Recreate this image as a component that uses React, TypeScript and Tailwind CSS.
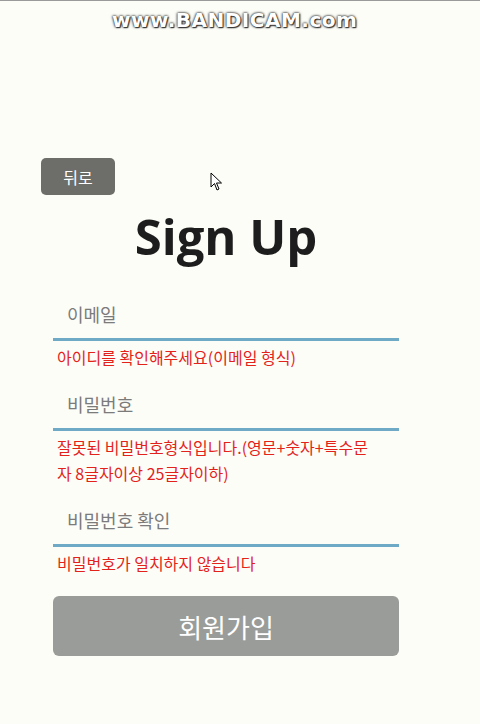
import React from "react";

const KR = "font-['Noto_Sans_CJK_KR','Noto_Sans',sans-serif]";

function Field({ placeholder, error, type = "text" }: { placeholder: string; error: string; type?: string }) {
  return (
    <div className="flex flex-col pb-[9px]">
      <input
        type={type}
        placeholder={placeholder}
        className={`h-[52px] w-full border-b-[3px] border-[#6ea9c6] bg-transparent px-[14px] text-[18px] text-[#333] outline-none placeholder:text-[#7b7b7b] ${KR}`}
      />
      <p className={`mt-[3px] min-h-[26px] pl-[4px] pr-[20px] text-[16px] leading-[26px] text-[#e3231b] ${KR}`}>{error}</p>
    </div>
  );
}

export default function App() {
  return (
    <div className="relative h-[724px] w-[480px] overflow-hidden border-t border-[#9a9a9a] bg-[#fdfdf8]">
      {/* recorder watermark */}
      <div className="absolute left-[112px] top-[4px] font-['DejaVu_Sans',sans-serif] text-[20px] font-bold tracking-[0.5px] text-white [text-shadow:0_0_2px_#222,0_0_3px_#444,1px_1px_1px_#333]">
        www.BANDICAM.com
      </div>

      {/* mouse cursor */}
      <svg className="absolute left-[210px] top-[171px]" width="13" height="20" viewBox="0 0 13 20">
        <path d="M1 1 L1 15 L4.5 11.5 L7 18 L9 17 L6.5 11 L11.5 11 Z" fill="white" stroke="black" strokeWidth="1" strokeLinejoin="round" />
      </svg>

      <div className="flex flex-col pl-[41px] pt-[157px]">
        <button className={`h-[37px] w-[74px] rounded-[5px] bg-[#6d6d69] text-[16px] text-white ${KR}`}>
          뒤로
        </button>
      </div>

      <div className="ml-[53px] flex w-[346px] flex-col">
        <h1 className="mt-[10px] text-center font-['Open_Sans',sans-serif] text-[49px] font-bold leading-[62px] text-[#1d1d1d]">
          Sign Up
        </h1>
        <div className="mt-[22px] flex flex-col">
          <Field placeholder="이메일" error="아이디를 확인해주세요(이메일 형식)" />
          <Field type="password" placeholder="비밀번호" error="잘못된 비밀번호형식입니다.(영문+숫자+특수문자 8글자이상 25글자이하)" />
          <Field type="password" placeholder="비밀번호 확인" error="비밀번호가 일치하지 않습니다" />
        </div>
        <button className={`mt-[11px] h-[60px] w-full rounded-[6px] bg-[#9a9c9a] text-[26px] text-white ${KR}`}>
          회원가입
        </button>
      </div>
    </div>
  );
}
